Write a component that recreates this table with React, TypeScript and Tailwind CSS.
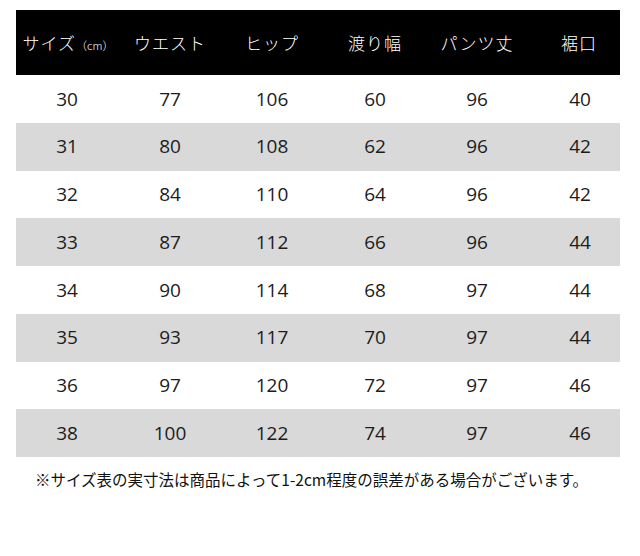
const headers = ['ウエスト', 'ヒップ', '渡り幅', 'パンツ丈', '裾口']

const rows = [
  ['30', '77', '106', '60', '96', '40'],
  ['31', '80', '108', '62', '96', '42'],
  ['32', '84', '110', '64', '96', '42'],
  ['33', '87', '112', '66', '96', '44'],
  ['34', '90', '114', '68', '97', '44'],
  ['35', '93', '117', '70', '97', '44'],
  ['36', '97', '120', '72', '97', '46'],
  ['38', '100', '122', '74', '97', '46'],
]

const cols = 'grid grid-cols-[102px_104px_100px_106px_98px_94px]'

export default function App() {
  return (
    <div className="w-[640px] h-[556px] bg-white pt-[10px] pl-[16px]" style={{ fontFamily: '"Open Sans", "Noto Sans CJK JP", sans-serif' }}>
      <div className="w-[604px]">
        {/* header */}
        <div className={`${cols} h-[65px] bg-black text-white items-center text-[17px] tracking-[1px]`} style={{ fontFamily: '"Noto Sans CJK JP", sans-serif', fontWeight: 300 }}>
          <div className="flex items-baseline justify-center pl-[2px]">
            サイズ<span className="text-[11px] tracking-normal">（cm）</span>
          </div>
          {headers.map((h, i) => (
            <div key={h} className={`text-center ${i === 4 ? 'pl-[12px]' : ''}`}>{h}</div>
          ))}
        </div>

        {/* body */}
        {rows.map((r, ri) => (
          <div key={ri} className={`${cols} h-[47.75px] items-center text-[19px] text-[#1c1c1c] ${ri % 2 ? 'bg-[#d9d9d9]' : 'bg-white'}`}>
            {r.map((v, ci) => (
              <div key={ci} className={`text-center ${ci === 5 ? 'pl-[14px]' : ''}`}>{v}</div>
            ))}
          </div>
        ))}
      </div>

      <p className="mt-[10px] pl-[19px] text-[15.5px] text-[#111] leading-[24px]" style={{ fontFamily: '"Noto Sans CJK JP", sans-serif' }}>
        ※サイズ表の実寸法は商品によって1-2cm程度の誤差がある場合がございます。
      </p>
    </div>
  )
}
